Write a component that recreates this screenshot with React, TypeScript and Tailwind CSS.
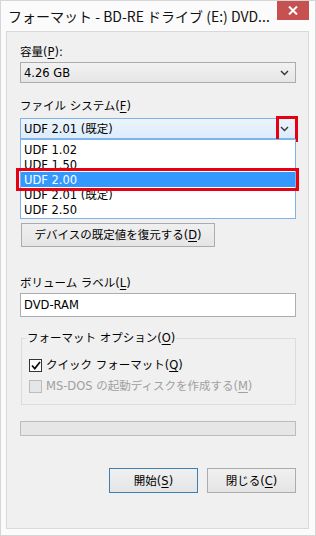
import React from 'react';

const font = { fontFamily: '"DejaVu Sans", "Noto Sans CJK JP", sans-serif' };
const titleFont = { fontFamily: '"Noto Sans CJK JP", "Noto Sans", sans-serif' };

const Chevron: React.FC = () => (
  <svg width="9" height="6" viewBox="0 0 9 6" className="text-[#333]">
    <polyline points="1,1 4.5,4.5 8,1" fill="none" stroke="currentColor" strokeWidth="1.4" />
  </svg>
);

const Mn: React.FC<{ children: React.ReactNode }> = ({ children }) => (
  <span className="underline underline-offset-2">{children}</span>
);

const App: React.FC = () => {
  const options = ['UDF 1.02', 'UDF 1.50', 'UDF 2.00', 'UDF 2.01 (既定)', 'UDF 2.50'];

  return (
    <div
      style={font}
      className="w-[316px] h-[536px] bg-[#fbfbfb] border border-[#d6d6d6] flex flex-col text-[11.5px] leading-4 text-black overflow-hidden"
    >
      {/* Title bar */}
      <div className="h-[30px] flex items-start justify-between shrink-0">
        <div style={titleFont} className="pl-[7px] pt-[5px] text-[14px] leading-5 whitespace-nowrap text-[#111]">
          フォーマット - BD-RE ドライブ (E:) DVD...
        </div>
        <button className="w-[32px] h-[20px] mr-[6px] -mt-px bg-[#c75050] text-white flex items-center justify-center shrink-0">
          <svg width="10" height="9" viewBox="0 0 10 9">
            <path d="M1 0.5 L9 8.5 M9 0.5 L1 8.5" stroke="white" strokeWidth="2" />
          </svg>
        </button>
      </div>

      {/* Body */}
      <div className="flex-1 ml-[5px] mr-[6px] mb-[6px] bg-[#f0f0f0] border border-[#d9d9d9] pl-[13px] pr-[12px] pt-[12px] flex flex-col">
        <div className="h-4">容量(<Mn>P</Mn>):</div>
        <div className="mt-[2px] h-[21px] border border-[#acacac] bg-gradient-to-b from-[#f2f2f2] to-[#e6e6e6] flex items-center justify-between pl-[3px] pr-[6px]">
          <span>4.26 GB</span>
          <Chevron />
        </div>

        <div className="mt-[15px] h-4">ファイル システム(<Mn>F</Mn>)</div>
        <div className="relative mt-[4px]">
          <div className="h-[21px] border border-[#7eb4ea] bg-gradient-to-b from-[#ecf4fc] to-[#dcecfc] flex items-center justify-between pl-[3px] pr-[6px]">
            <span>UDF 2.01 (既定)</span>
            <Chevron />
          </div>
          <div className="absolute right-[-2px] top-[-2px] w-[22px] h-[26px] border-[3px] border-[#e50012]" />

          {/* open list */}
          <div className="absolute left-0 right-0 top-[21px] bg-white border border-[#7eb4ea] pt-[2px] pb-px z-10">
            {options.map((o) => (
              <div
                key={o}
                className={
                  o === 'UDF 2.00'
                    ? 'relative h-[15px] leading-[16px] pl-[3px] bg-[#3399ff] text-white'
                    : 'h-[15px] leading-[16px] pl-[3px]'
                }
              >
                {o}
                {o === 'UDF 2.00' && (
                  <div className="absolute -left-[5px] -right-[4px] -top-[4px] -bottom-[4px] border-[3px] border-[#e50012]" />
                )}
              </div>
            ))}
          </div>
        </div>

        <button className="mt-[84px] ml-px w-[194px] h-[24px] border border-[#acacac] bg-gradient-to-b from-[#f0f0f0] to-[#e5e5e5] text-center">
          デバイスの既定値を復元する(<Mn>D</Mn>)
        </button>

        <div className="mt-[28px] h-4">ボリューム ラベル(<Mn>L</Mn>)</div>
        <div className="mt-[2px] h-[24px] border border-[#abadb3] bg-white flex items-center pl-[3px]">
          DVD-RAM
        </div>

        <fieldset className="mt-[13px] ml-px border border-[#dcdcdc] pl-[7px] pb-[10px]">
          <legend className="-ml-[3px] px-px">フォーマット オプション(<Mn>O</Mn>)</legend>
          <label className="mt-[11px] h-4 flex items-center gap-[4px]">
            <span className="w-[13px] h-[13px] border border-[#333] bg-white flex items-center justify-center">
              <svg width="10" height="9" viewBox="0 0 10 9">
                <polyline points="1,4.5 3.8,7.5 9,1" fill="none" stroke="#111" strokeWidth="1.8" />
              </svg>
            </span>
            <span>クイック フォーマット(<Mn>Q</Mn>)</span>
          </label>
          <label className="mt-[5px] h-4 flex items-center gap-[4px] text-[#a0a0a0]">
            <span className="w-[13px] h-[13px] border border-[#bcbcbc] bg-[#e6e6e6]" />
            <span>MS-DOS の起動ディスクを作成する(<Mn>M</Mn>)</span>
          </label>
        </fieldset>

        <div className="mt-[16px] h-[15px] border border-[#bcbcbc] bg-[#e6e6e6]" />

        <div className="mt-[32px] flex justify-end gap-[9px]">
          <button className="w-[89px] h-[25px] border border-[#3c7fb1] bg-gradient-to-b from-[#f0f0f0] to-[#e5e5e5]">
            開始(<Mn>S</Mn>)
          </button>
          <button className="w-[89px] h-[25px] border border-[#acacac] bg-gradient-to-b from-[#f0f0f0] to-[#e5e5e5]">
            閉じる(<Mn>C</Mn>)
          </button>
        </div>
      </div>
    </div>
  );
};

export default App;
